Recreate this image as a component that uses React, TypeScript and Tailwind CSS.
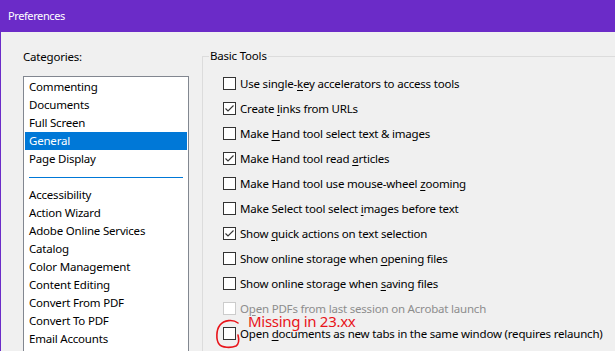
type Row = { pre: string; key: string; post: string; checked?: boolean; disabled?: boolean };

const categoriesTop = ["Commenting", "Documents", "Full Screen", "General", "Page Display"];
const categoriesBottom = [
  "Accessibility",
  "Action Wizard",
  "Adobe Online Services",
  "Catalog",
  "Color Management",
  "Content Editing",
  "Convert From PDF",
  "Convert To PDF",
  "Email Accounts",
];

const rows: Row[] = [
  { pre: "Use single-", key: "k", post: "ey accelerators to access tools" },
  { pre: "Create ", key: "l", post: "inks from URLs", checked: true },
  { pre: "Make ", key: "H", post: "and tool select text & images" },
  { pre: "Make Hand tool read ", key: "a", post: "rticles", checked: true },
  { pre: "Make Hand tool use mouse-wheel ", key: "z", post: "ooming" },
  { pre: "Make Select tool select ", key: "i", post: "mages before text" },
  { pre: "Show ", key: "q", post: "uick actions on text selection", checked: true },
  { pre: "Show online storage when ", key: "o", post: "pening files" },
  { pre: "Show online storage when ", key: "s", post: "aving files" },
  { pre: "O", key: "p", post: "en PDFs from last session on Acrobat launch", disabled: true },
  { pre: "Open ", key: "d", post: "ocuments as new tabs in the same window (requires relaunch)" },
];

function Checkbox({ checked, disabled }: { checked?: boolean; disabled?: boolean }) {
  return (
    <svg width="13" height="13" viewBox="0 0 13 13" className="shrink-0">
      <rect
        x="0.5"
        y="0.5"
        width="12"
        height="12"
        fill="#fff"
        stroke={disabled ? "#cccccc" : "#333333"}
      />
      {checked && (
        <path d="M2.5 6.5 L5 9 L10.5 3.5" fill="none" stroke="#333333" strokeWidth="1.1" />
      )}
    </svg>
  );
}

export default function App() {
  return (
    <div className="relative h-[351px] w-[615px] overflow-hidden border-l border-[#6b2bc8] bg-[#f0f0f0] font-['Segoe_UI','Noto_Sans',sans-serif] text-[11.5px] tracking-[-0.2px] text-black">
      {/* Title bar */}
      <div className="flex h-[32px] items-center bg-[#6b2bc8] pl-[7px] text-[11px] tracking-[-0.4px] text-white">
        Preferences
      </div>

      <div className="flex">
        {/* Categories */}
        <div className="ml-[22px] w-[166px] shrink-0 pt-[17px]">
          <div className="leading-[16px]">Categories:</div>
          <div className="mt-[11px] h-[300px] border border-[#828790] bg-white p-px">
            {categoriesTop.map((c) => (
              <div
                key={c}
                className={
                  c === "General"
                    ? "h-[18px] bg-[#0078d7] px-[4px] leading-[18px] text-white"
                    : "h-[18px] px-[4px] leading-[18px]"
                }
              >
                {c}
              </div>
            ))}
            <div className="flex h-[18px] items-center px-[4px]">
              <div className="h-px w-full bg-[#0078d7]" />
            </div>
            {categoriesBottom.map((c) => (
              <div key={c} className="h-[18px] px-[4px] leading-[18px]">
                {c}
              </div>
            ))}
          </div>
        </div>

        {/* Basic Tools group */}
        <div className="relative ml-[13px] mt-[24px] h-[400px] flex-1 border-l border-t border-[#dcdcdc] pl-[20px] pt-[14px]">
          <div className="absolute -top-[9px] left-[6px] bg-[#f0f0f0] px-px leading-[16px]">Basic Tools</div>
          {rows.map((r, i) => (
            <div key={i} className="flex h-[25px] items-center gap-[4px] whitespace-nowrap">
              <Checkbox checked={r.checked} disabled={r.disabled} />
              <span className={r.disabled ? "text-[#8d8d8d]" : ""}>
                {r.pre}
                <span className="underline underline-offset-2">{r.key}</span>
                {r.post}
              </span>
            </div>
          ))}
        </div>
      </div>

      {/* Annotation */}
      <div className="absolute left-[247px] top-[311px] text-[15px] leading-[20px] tracking-[-0.3px] text-[#e8141a]">
        Missing in 23.xx
      </div>
      <svg className="absolute left-[212px] top-[317px]" width="32" height="34" viewBox="0 0 32 34">
        <path
          d="M25 6 C20 2, 11 3, 7 8 C3 13, 3 23, 6 27 C9 31, 18 31, 23 29 C26 27, 26 22, 25 18"
          fill="none"
          stroke="#e8141a"
          strokeWidth="1.6"
          strokeLinecap="round"
        />
      </svg>
    </div>
  );
}
